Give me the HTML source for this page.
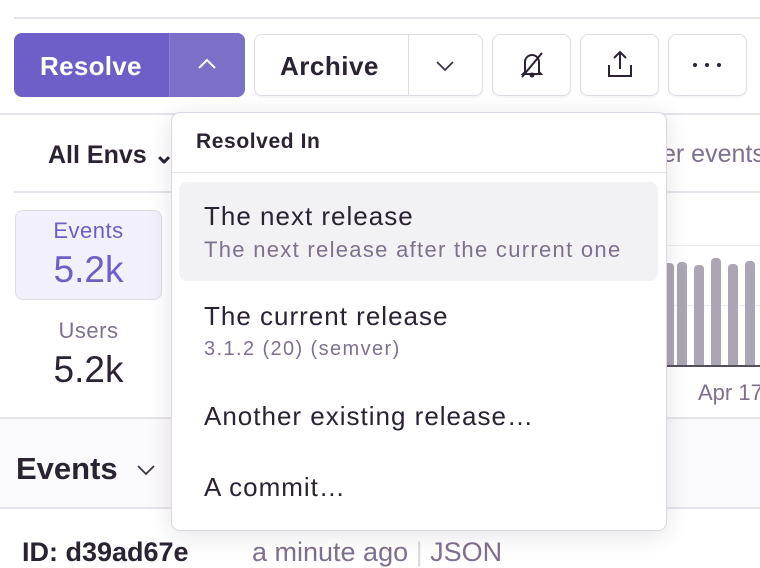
<!DOCTYPE html>
<html><head><style>
*{box-sizing:border-box;margin:0;padding:0}
body{width:760px;height:558px;overflow:hidden;background:#fff;font-family:"Liberation Sans",sans-serif;color:#2b2233;position:relative}
.abs{position:absolute;white-space:nowrap}
.btn{position:absolute;border:1px solid #e0dce5;border-radius:8px;background:#fff;box-shadow:0 2px 0 rgba(43,34,51,.04)}
.hl{position:absolute;left:0;height:2px;background:#e7e3ec}
.bar{position:absolute;width:10px;background:#aca5b5;border-radius:4px 4px 0 0;bottom:193px}
.it{font-size:26px;letter-spacing:1px;color:#2b2233}
</style></head><body>
<div class="hl" style="top:17px;left:14px;width:746px"></div>
<div class="abs" style="left:14px;top:33px;width:231px;height:64px;border-radius:8px;background:#6c5fc7;overflow:hidden">
 <div class="abs" style="left:155px;top:0;width:76px;height:64px;background:#7b70c8;border-left:1px solid #8b80d2"></div>
 <div class="abs" style="left:26px;top:18px;color:#fff;font-size:26px;font-weight:bold;letter-spacing:.3px">Resolve</div>
 <svg class="abs" style="left:183px;top:24px" width="20" height="14"><path d="M2 11L10 3L18 11" stroke="#fff" stroke-width="2" fill="none"/></svg>
</div>
<div class="btn" style="left:254px;top:34px;width:229px;height:62px">
 <div class="abs" style="left:25px;top:16px;font-size:26px;font-weight:bold;color:#2b2233;letter-spacing:.5px">Archive</div>
 <div class="abs" style="left:153px;top:0;width:1px;height:60px;background:#e0dce5"></div>
 <svg class="abs" style="left:180px;top:24px" width="20" height="14"><path d="M2 3L10 11L18 3" stroke="#3e3446" stroke-width="1.8" fill="none"/></svg>
</div>
<div class="btn" style="left:492px;top:34px;width:79px;height:62px">
 <svg class="abs" style="left:25px;top:15px" width="28" height="30" viewBox="0 0 28 30"><path d="M7 22V12a7 7 0 0 1 14 0v10l2 2H5z" stroke="#2b2233" stroke-width="2" fill="none"/><circle cx="14" cy="25" r="2.5" fill="#2b2233"/><path d="M4 27L24 3" stroke="#2b2233" stroke-width="2"/></svg>
</div>
<div class="btn" style="left:580px;top:34px;width:79px;height:62px">
 <svg class="abs" style="left:25px;top:14px" width="28" height="30" viewBox="0 0 28 30"><path d="M14 20V3M8 9l6-6 6 6M3 16v11h22V16" stroke="#2b2233" stroke-width="2" fill="none"/></svg>
</div>
<div class="btn" style="left:668px;top:34px;width:79px;height:62px">
 <div class="abs" style="left:24px;top:28px;width:4px;height:4px;border-radius:2px;background:#2b2233"></div>
 <div class="abs" style="left:36px;top:28px;width:4px;height:4px;border-radius:2px;background:#2b2233"></div>
 <div class="abs" style="left:48px;top:28px;width:4px;height:4px;border-radius:2px;background:#2b2233"></div>
</div>
<div class="hl" style="top:113px;width:760px"></div>
<div class="abs" style="left:48px;top:140px;font-size:25px;font-weight:bold;color:#2b2233">All Envs ⌄</div>
<div class="abs" style="left:662px;top:140px;font-size:25px;color:#80708f">er events</div>
<div class="hl" style="top:191px;left:14px;width:746px"></div>
<div class="abs" style="left:15px;top:210px;width:147px;height:90px;border:1px solid #e0dce5;border-radius:8px;background:#f2f0fb"></div>
<div class="abs" style="left:15px;top:218px;width:147px;text-align:center;font-size:22px;letter-spacing:.5px;color:#6c5fc7">Events</div>
<div class="abs" style="left:15px;top:249px;width:147px;text-align:center;font-size:37px;color:#6c5fc7">5.2k</div>
<div class="abs" style="left:15px;top:318px;width:147px;text-align:center;font-size:22px;letter-spacing:.5px;color:#80708f">Users</div>
<div class="abs" style="left:15px;top:349px;width:147px;text-align:center;font-size:37px;color:#2b2233">5.2k</div>
<div class="abs" style="left:660px;top:245px;width:100px;height:1px;background:#ece9f0"></div>
<div class="abs" style="left:660px;top:305px;width:100px;height:1px;background:#ece9f0"></div>
<div class="bar" style="left:664px;height:102px"></div>
<div class="bar" style="left:677px;height:103px"></div>
<div class="bar" style="left:694px;height:100px"></div>
<div class="bar" style="left:711px;height:107px"></div>
<div class="bar" style="left:728px;height:101px"></div>
<div class="bar" style="left:745px;height:104px"></div>
<div class="abs" style="left:660px;top:365px;width:100px;height:2px;background:#564d60"></div>
<div class="abs" style="left:698px;top:380px;font-size:22px;color:#80708f">Apr 17</div>
<div class="hl" style="top:417px;width:760px"></div>
<div class="abs" style="left:0;top:419px;width:760px;height:88px;background:#faf9fb"></div>
<div class="abs" style="left:16px;top:451px;font-size:31px;font-weight:bold;color:#2b2233">Events</div>
<svg class="abs" style="left:136px;top:463px" width="20" height="14"><path d="M2 3L10 11L18 3" stroke="#3e3446" stroke-width="1.8" fill="none"/></svg>
<div class="hl" style="top:507px;width:760px"></div>
<div class="abs" style="left:22px;top:537px;font-size:27px;font-weight:bold">ID: d39ad67e</div>
<div class="abs" style="left:252px;top:537px;font-size:27px;color:#80708f">a minute ago <span style="color:#ddd">|</span> JSON</div>
<div class="abs" style="left:171px;top:112px;width:496px;height:419px;background:#fff;border:1px solid #dcd7e2;border-radius:9px;box-shadow:0 4px 24px rgba(43,34,51,.12)">
 <div class="abs" style="left:24px;top:17px;font-size:21px;letter-spacing:.6px;font-weight:bold;color:#2b2233">Resolved In</div>
 <div class="abs" style="left:0;top:59px;width:494px;height:1px;background:#e7e3ec"></div>
 <div class="abs" style="left:7px;top:69px;width:479px;height:99px;background:#f2f1f3;border-radius:8px"></div>
 <div class="abs it" style="left:32px;top:88px">The next release</div>
 <div class="abs" style="left:32px;top:124px;font-size:22px;letter-spacing:1.3px;color:#80708f">The next release after the current one</div>
 <div class="abs it" style="left:32px;top:188px">The current release</div>
 <div class="abs" style="left:32px;top:225px;font-size:20px;letter-spacing:1.4px;color:#80708f">3.1.2 (20) (semver)</div>
 <div class="abs it" style="left:32px;top:288px">Another existing release…</div>
 <div class="abs it" style="left:32px;top:359px">A commit…</div>
</div>
</body></html>
